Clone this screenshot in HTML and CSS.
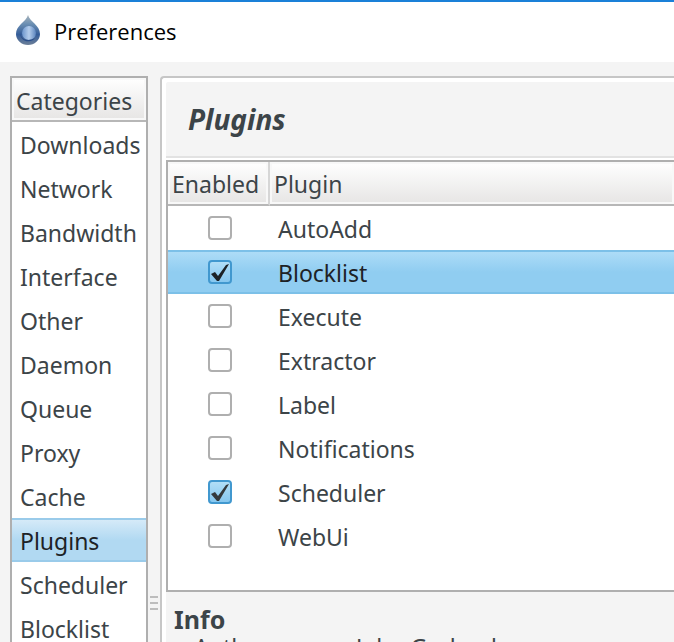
FILE: index.html
```html
<!DOCTYPE html>
<html lang="en">
<head>
<meta charset="utf-8">
<title>Preferences</title>
<link rel="stylesheet" href="styles.css">
</head>
<body>
<header class="titlebar">
  <svg class="logo" viewBox="0 0 24 32" aria-hidden="true">
    <defs>
      <linearGradient id="drop" x1="0" y1="0" x2="0" y2="1">
        <stop offset="0" stop-color="#a9b4bc"/>
        <stop offset=".3" stop-color="#6b8fb3"/>
        <stop offset=".65" stop-color="#355d99"/>
        <stop offset="1" stop-color="#6c7f98"/>
      </linearGradient>
      <linearGradient id="shine" x1="0" y1="0" x2="1" y2="0">
        <stop offset="0" stop-color="#6c95cc"/>
        <stop offset=".5" stop-color="#b4cdec"/>
        <stop offset="1" stop-color="#5c85be"/>
      </linearGradient>
    </defs>
    <path d="M12 0C10 7 0 10 0 19a12 11 0 0 0 24 0C24 10 14 7 12 0Z" fill="url(#drop)"/>
    <circle cx="13" cy="18" r="7" fill="url(#shine)"/>
    <path d="M4 16c0 9 8 11 15 7-4 6-16 4-15-7Z" fill="#294e8a"/>
  </svg>
  <span>Preferences</span>
</header>
<main class="window">
  <nav class="categories" aria-label="Categories">
    <h2 class="head">Categories</h2>
    <a href="#downloads">Downloads</a>
    <a href="#network">Network</a>
    <a href="#bandwidth">Bandwidth</a>
    <a href="#interface">Interface</a>
    <a href="#other">Other</a>
    <a href="#daemon">Daemon</a>
    <a href="#queue">Queue</a>
    <a href="#proxy">Proxy</a>
    <a href="#cache">Cache</a>
    <a href="#plugins" class="current" aria-current="page">Plugins</a>
    <a href="#scheduler">Scheduler</a>
    <a href="#blocklist">Blocklist</a>
  </nav>
  <div class="splitter"><i></i><i></i><i></i></div>
  <section class="panel">
    <h1>Plugins</h1>
    <div class="list">
      <table>
        <thead><tr><th class="enabled">Enabled</th><th>Plugin</th></tr></thead>
        <tbody>
          <tr><td><input type="checkbox" id="p1"></td><td><label for="p1">AutoAdd</label></td></tr>
          <tr class="selected"><td><input type="checkbox" id="p2" checked></td><td><label for="p2">Blocklist</label></td></tr>
          <tr><td><input type="checkbox" id="p3"></td><td><label for="p3">Execute</label></td></tr>
          <tr><td><input type="checkbox" id="p4"></td><td><label for="p4">Extractor</label></td></tr>
          <tr><td><input type="checkbox" id="p5"></td><td><label for="p5">Label</label></td></tr>
          <tr><td><input type="checkbox" id="p6"></td><td><label for="p6">Notifications</label></td></tr>
          <tr><td><input type="checkbox" id="p7" checked></td><td><label for="p7">Scheduler</label></td></tr>
          <tr><td><input type="checkbox" id="p8"></td><td><label for="p8">WebUi</label></td></tr>
        </tbody>
      </table>
    </div>
    <div class="info">
      <h2>Info</h2>
      <dl><dt>Author:</dt><dd>John Garland</dd></dl>
    </div>
  </section>
</main>
</body>
</html>
```
FILE: styles.css
```css
* { box-sizing: border-box; }

body {
  margin: 0;
  height: 100vh;
  overflow: hidden;
  display: flex;
  flex-direction: column;
  background: #f4f4f4;
  color: #3c4448;
  font: 23px/28px "Noto Sans", sans-serif;
}

h1, h2, dl, dd { margin: 0; }

.titlebar {
  flex: none;
  display: flex;
  align-items: center;
  gap: 14px;
  height: 62px;
  padding: 0 16px 2px;
  border-top: 2px solid #1a80d8;
  background: #fff;
  color: #000;
  font-size: 22px;
  font-family: "Open Sans", sans-serif;
}

.logo { width: 24px; height: 32px; }

.window {
  flex: 1;
  min-height: 0;
  display: grid;
  grid-template-columns: 138px 12px minmax(0, 1fr);
  padding: 14px 0 0 10px;
}

.categories {
  min-height: 0;
  overflow: hidden;
  border: 2px solid #afafaf;
  border-bottom: 0;
  background: #fff;
}

.head, th {
  height: 44px;
  border-bottom: 2px solid #b7b7b7;
  background: linear-gradient(#fff, #e6e5e4);
  box-shadow: inset 0 0 0 2px #f8f8f8;
  font-size: 23px;
  font-weight: 400;
  text-align: left;
}

.head { padding: 9px 4px 5px; line-height: 28px; }

.categories a {
  display: block;
  height: 44px;
  padding: 9px 8px 7px;
  color: inherit;
  text-decoration: none;
}

.categories .current {
  padding: 7px 8px 5px;
  border: solid #9acbea;
  border-width: 2px 0;
  background: linear-gradient(#d5eaf8, #b1d9f2 50%);
  color: #1d2226;
}

.splitter {
  display: flex;
  flex-direction: column;
  align-items: center;
  gap: 4px;
  padding-top: 520px;
}

.splitter i { flex: none; width: 8px; height: 2px; background: #bdbdbd; }

.panel {
  min-height: 0;
  overflow: hidden;
  border: solid #c6c6c6;
  border-width: 2px 0 0 2px;
  border-top-left-radius: 4px;
  box-shadow: inset 4px 4px #fff;
  padding: 4px 0 0 4px;
}

h1 {
  padding: 24px 22px;
  border-bottom: 2px solid #e2e2e2;
  box-shadow: 0 2px #fff;
  font: italic 700 28px/26px "Noto Sans", sans-serif;
}

.list {
  height: 432px;
  margin-top: 2px;
  border: solid #afafaf;
  border-width: 2px 0 2px 2px;
  background: #fff;
}

table { width: 100%; border-spacing: 0; table-layout: fixed; }
th { padding: 2px 4px 0; }
.enabled { width: 102px; border-right: 2px solid #d6d6d6; }
td { height: 44px; padding: 0; }
td:first-child { padding-left: 2px; text-align: center; }
td:last-child { padding: 2px 0 0 8px; }

.selected td {
  border: solid #7cc0e8;
  border-width: 2px 0;
  background: linear-gradient(#addcf7, #90cdf1 50%);
  color: #1d2226;
}

input {
  appearance: none;
  display: block;
  width: 24px;
  height: 24px;
  margin: 0 auto;
  border: 2px solid #afafaf;
  border-radius: 4px;
  background: #fff;
}

input:checked {
  border-color: #4198cf;
  background: linear-gradient(#b1def7, #86c7ef);
}

input:checked::before {
  content: "";
  display: block;
  width: 20px;
  height: 20px;
  background: #34393c;
  clip-path: polygon(1px 12px, 5px 10px, 8px 14px, 16px 3px, 19px 2px, 9px 19px, 7px 19px);
}

.selected input:checked::before { background: #1d2226; }

.info { padding: 13px 8px; }
.info h2 { font-size: 25px; line-height: 28px; }
dl { display: grid; grid-template-columns: 162px 1fr; padding-left: 20px; }
```
